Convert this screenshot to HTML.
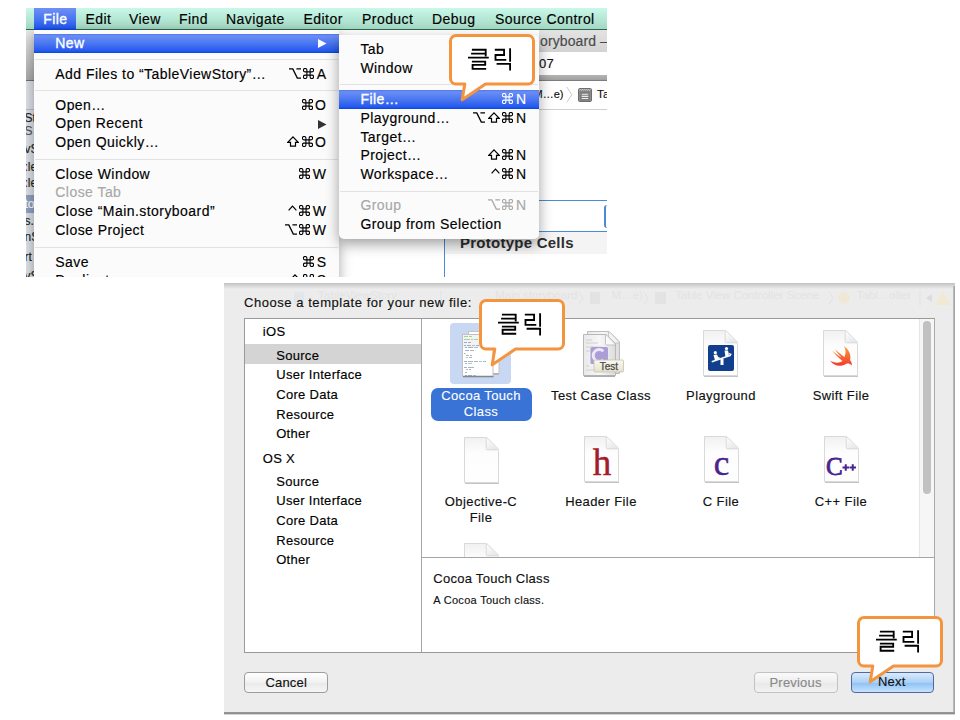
<!DOCTYPE html><html><head><meta charset="utf-8"><style>
html,body{margin:0;padding:0}
body{width:960px;height:720px;position:relative;overflow:hidden;background:#fff;font-family:"Liberation Sans",sans-serif}
.t{position:absolute;white-space:nowrap;-webkit-text-stroke:0.15px currentColor}
.k{display:inline-block;vertical-align:0;margin-right:2.5px;overflow:visible}
.clip{position:absolute;left:0;top:0;width:960px;height:720px}
</style></head><body>
<svg width="0" height="0" style="position:absolute">
<defs>
<symbol id="cmd" viewBox="0 0 11 11"><path d="M3.9 3.9H7.1V7.1H3.9ZM3.9 3.9V2.15A1.75 1.75 0 1 0 2.15 3.9H3.9M7.1 3.9V2.15A1.75 1.75 0 1 1 8.85 3.9H7.1M7.1 7.1V8.85A1.75 1.75 0 1 0 8.85 7.1H7.1M3.9 7.1V8.85A1.75 1.75 0 1 1 2.15 7.1H3.9" fill="none" stroke="currentColor" stroke-width="1.1"/></symbol>
<symbol id="opt" viewBox="0 0 12 11"><path d="M0 0.9H3.8L8.3 10.1H12M7.4 0.9H12" fill="none" stroke="currentColor" stroke-width="1.3"/></symbol>
<symbol id="shf" viewBox="0 0 12 11"><path d="M6 0.9L11.2 6.3H8.5V10.2H3.5V6.3H0.8Z" fill="none" stroke="currentColor" stroke-width="1.2" stroke-linejoin="miter"/></symbol>
<symbol id="car" viewBox="0 0 9 11"><path d="M0.6 5.4L4.5 1.1L8.4 5.4" fill="none" stroke="currentColor" stroke-width="1.2"/></symbol>
<symbol id="klik" viewBox="0 0 50 30">
<g fill="none" stroke="#000" stroke-width="1.85" stroke-linecap="butt">
<path d="M7.3 4.9H21.1V11.7"/><path d="M6.5 8.85H20.6"/><path d="M3.4 12.8H24.2"/>
<path d="M7.3 16.8H20.6V20H8V24H21.6"/>
<path d="M30.2 4.9H39.5V10.2H30.9V15.1H41.7"/><path d="M45.5 3.4V16.9"/>
<path d="M32 19H45.5V25.6"/>
</g></symbol>
</defs></svg>

<div class="clip" style="clip-path:inset(8px 353px 443px 26px)">
<div style="position:absolute;left:26px;top:30px;width:581px;height:247px;background:#fff"></div>
<div style="position:absolute;left:26px;top:30px;width:8px;height:50px;background:linear-gradient(#e9e9e9,#a9a9a9)"></div>
<div style="position:absolute;left:26px;top:80px;width:8px;height:1px;background:#6f6f6f"></div>
<div style="position:absolute;left:26px;top:81px;width:8px;height:196px;background:#dde1e6"></div>
<div style="position:absolute;left:26px;top:109px;width:8px;height:1px;background:#b9bcc0"></div>
<div style="position:absolute;left:26px;top:195px;width:8px;height:18px;background:#8fa2c4"></div>
<div class="t" style="left:24.50px;top:111.84px;font-size:12px;line-height:12px;color:#222;letter-spacing:0px;font-weight:normal;">Sto</div>
<div class="t" style="left:24.50px;top:125.34px;font-size:12px;line-height:12px;color:#555;letter-spacing:0px;font-weight:normal;">S S</div>
<div class="t" style="left:24.50px;top:142.84px;font-size:12px;line-height:12px;color:#222;letter-spacing:0px;font-weight:normal;">vS</div>
<div class="t" style="left:24.50px;top:160.84px;font-size:12px;line-height:12px;color:#222;letter-spacing:0px;font-weight:normal;">:le</div>
<div class="t" style="left:24.50px;top:177.34px;font-size:12px;line-height:12px;color:#222;letter-spacing:0px;font-weight:normal;">:le</div>
<div class="t" style="left:24.50px;top:198.34px;font-size:12px;line-height:12px;color:#fff;letter-spacing:0px;font-weight:normal;">to</div>
<div class="t" style="left:24.50px;top:214.84px;font-size:12px;line-height:12px;color:#222;letter-spacing:0px;font-weight:normal;">s.:</div>
<div class="t" style="left:24.50px;top:231.34px;font-size:12px;line-height:12px;color:#222;letter-spacing:0px;font-weight:normal;">nS</div>
<div class="t" style="left:24.50px;top:251.24px;font-size:12px;line-height:12px;color:#222;letter-spacing:0px;font-weight:normal;">rt</div>
<div class="t" style="left:24.50px;top:269.84px;font-size:12px;line-height:12px;color:#222;letter-spacing:0px;font-weight:normal;">vS</div>
<div style="position:absolute;left:539px;top:30px;width:68px;height:22px;background:linear-gradient(#e3e3e3,#d3d3d3)"></div>
<div class="t" style="left:540.00px;top:33.55px;font-size:14px;line-height:14px;color:#4a4a4a;letter-spacing:0.1px;font-weight:normal;">oryboard –</div>
<div class="t" style="left:539.00px;top:56.60px;font-size:13px;line-height:13px;color:#111;letter-spacing:0.2px;font-weight:normal;">07</div>
<div style="position:absolute;left:539px;top:75px;width:68px;height:6px;background:linear-gradient(#b4b4b4,#9c9c9c)"></div>
<div style="position:absolute;left:539px;top:80px;width:68px;height:1px;background:#7d7d7d"></div>
<div class="t" style="right:396.50px;top:89.29px;font-size:11px;line-height:11px;color:#111;letter-spacing:0px;font-weight:normal;">M…e)</div>
<svg style="position:absolute;left:566px;top:86px" width="10" height="18"><path d="M0.8 1L5.8 8.7L0.8 16.3" fill="none" stroke="#c4c4c4" stroke-width="0.9"/></svg>
<svg style="position:absolute;left:578px;top:88px" width="15" height="14"><rect x="0.5" y="0.5" width="13" height="13" rx="1.2" fill="#8c8c8c" stroke="#6e6e6e" stroke-width="1"/><path d="M1.5 2.2L2.5 1.5L3.5 2.2L4.5 1.5L5.5 2.2L6.5 1.5L7.5 2.2L8.5 1.5L9.5 2.2L10.5 1.5L11.5 2.2L12.5 1.5" fill="none" stroke="#e0e0e0" stroke-width="0.8"/><rect x="2" y="3.5" width="10" height="9" fill="#7d7d7d"/><path d="M3.7 6.2H10.3M3.7 8.4H10.3M3.7 10.5H10.3" stroke="#ececec" stroke-width="1.1"/></svg>
<div class="t" style="left:597.00px;top:88.87px;font-size:11.5px;line-height:11.5px;color:#111;letter-spacing:0.2px;font-weight:normal;">Ta</div>
<div style="position:absolute;left:539px;top:109px;width:68px;height:1px;background:#cfcfcf"></div>
<div style="position:absolute;left:444px;top:200px;width:1px;height:77px;background:#4a8ad8"></div>
<div style="position:absolute;left:444px;top:200px;width:163px;height:1px;background:#4a8ad8"></div>
<div style="position:absolute;left:444px;top:231px;width:163px;height:1px;background:#4a8ad8"></div>
<div style="position:absolute;left:604px;top:205px;width:3px;height:23px;border-left:2px solid #4a8ad8;border-radius:3px 0 0 3px;box-sizing:border-box"></div>
<div style="position:absolute;left:445px;top:232px;width:162px;height:22px;background:#f4f4f4"></div>
<div class="t" style="left:460.00px;top:234.50px;font-size:15px;line-height:15px;color:#2e2e2e;letter-spacing:0.25px;font-weight:bold;-webkit-text-stroke:0">Prototype Cells</div>
<div style="position:absolute;left:26px;top:8px;width:581px;height:21px;background:linear-gradient(#c9f8e9,#a3d8c3)"></div>
<div style="position:absolute;left:26px;top:29px;width:581px;height:1px;background:#2c664e"></div>
<div style="position:absolute;left:34px;top:8px;width:42px;height:22px;background:linear-gradient(#6f90f4 0%,#4a76f1 50%,#2459ef 90%,#0543dc 100%)"></div>
<div class="t" style="left:43.20px;top:12.15px;font-size:14px;line-height:14px;color:#fff;letter-spacing:0.45px;font-weight:normal;-webkit-text-stroke:0.35px #fff">File</div>
<div class="t" style="left:85.40px;top:12.15px;font-size:14px;line-height:14px;color:#000;letter-spacing:0.45px;font-weight:normal;">Edit</div>
<div class="t" style="left:129.00px;top:12.15px;font-size:14px;line-height:14px;color:#000;letter-spacing:0.45px;font-weight:normal;">View</div>
<div class="t" style="left:179.00px;top:12.15px;font-size:14px;line-height:14px;color:#000;letter-spacing:0.45px;font-weight:normal;">Find</div>
<div class="t" style="left:226.00px;top:12.15px;font-size:14px;line-height:14px;color:#000;letter-spacing:0.45px;font-weight:normal;">Navigate</div>
<div class="t" style="left:303.50px;top:12.15px;font-size:14px;line-height:14px;color:#000;letter-spacing:0.45px;font-weight:normal;">Editor</div>
<div class="t" style="left:362.00px;top:12.15px;font-size:14px;line-height:14px;color:#000;letter-spacing:0.45px;font-weight:normal;">Product</div>
<div class="t" style="left:432.00px;top:12.15px;font-size:14px;line-height:14px;color:#000;letter-spacing:0.45px;font-weight:normal;">Debug</div>
<div class="t" style="left:495.00px;top:12.15px;font-size:14px;line-height:14px;color:#000;letter-spacing:0.45px;font-weight:normal;">Source Control</div>
<div style="position:absolute;left:34px;top:30px;width:305px;height:260px;background:#fbfbfb;box-shadow:0 4px 12px rgba(0,0,0,0.35)"></div>
<div style="position:absolute;left:34px;top:34px;width:305px;height:19px;background:linear-gradient(#4f76ee 0%,#6a8ef4 10%,#4a76f1 50%,#2459ef 90%,#0543dc 100%)"></div>
<div style="position:absolute;left:35px;top:59px;width:303px;height:1px;background:#e2e2e2"></div>
<div style="position:absolute;left:35px;top:90px;width:303px;height:1px;background:#e2e2e2"></div>
<div style="position:absolute;left:35px;top:159px;width:303px;height:1px;background:#e2e2e2"></div>
<div style="position:absolute;left:35px;top:247px;width:303px;height:1px;background:#e2e2e2"></div>
<div class="t" style="left:55.30px;top:36.15px;font-size:14px;line-height:14px;color:#fff;letter-spacing:0.45px;font-weight:normal;-webkit-text-stroke:0.35px #fff">New</div>
<div class="t" style="left:55.30px;top:66.85px;font-size:14px;line-height:14px;color:#000;letter-spacing:0.45px;font-weight:normal;">Add Files to “TableViewStory”…</div>
<div class="t" style="left:55.30px;top:97.85px;font-size:14px;line-height:14px;color:#000;letter-spacing:0.45px;font-weight:normal;">Open…</div>
<div class="t" style="left:55.30px;top:116.45px;font-size:14px;line-height:14px;color:#000;letter-spacing:0.45px;font-weight:normal;">Open Recent</div>
<div class="t" style="left:55.30px;top:135.15px;font-size:14px;line-height:14px;color:#000;letter-spacing:0.45px;font-weight:normal;">Open Quickly…</div>
<div class="t" style="left:55.30px;top:166.75px;font-size:14px;line-height:14px;color:#000;letter-spacing:0.45px;font-weight:normal;">Close Window</div>
<div class="t" style="left:55.30px;top:185.45px;font-size:14px;line-height:14px;color:#a8a8a8;letter-spacing:0.45px;font-weight:normal;">Close Tab</div>
<div class="t" style="left:55.30px;top:204.45px;font-size:14px;line-height:14px;color:#000;letter-spacing:0.45px;font-weight:normal;">Close “Main.storyboard”</div>
<div class="t" style="left:55.30px;top:223.05px;font-size:14px;line-height:14px;color:#000;letter-spacing:0.45px;font-weight:normal;">Close Project</div>
<div class="t" style="left:55.30px;top:254.65px;font-size:14px;line-height:14px;color:#000;letter-spacing:0.45px;font-weight:normal;">Save</div>
<div class="t" style="left:55.30px;top:273.35px;font-size:14px;line-height:14px;color:#000;letter-spacing:0.45px;font-weight:normal;">Duplicate…</div>
<svg style="position:absolute;left:318px;top:39px" width="9" height="9"><path d="M0 0L8.5 4.5L0 9Z" fill="#fff"/></svg>
<svg style="position:absolute;left:318px;top:119.5px" width="9" height="9"><path d="M0 0L8.5 4.5L0 9Z" fill="#333"/></svg>
<div class="t" style="right:634.00px;top:66.85px;font-size:14px;line-height:14px;color:#000;letter-spacing:0px;font-weight:normal;"><svg class="k" viewBox="0 0 12 11" width="12" height="11"><use href="#opt"/></svg><svg class="k" viewBox="0 0 11 11" width="11" height="11"><use href="#cmd"/></svg>A</div>
<div class="t" style="right:634.00px;top:97.85px;font-size:14px;line-height:14px;color:#000;letter-spacing:0px;font-weight:normal;"><svg class="k" viewBox="0 0 11 11" width="11" height="11"><use href="#cmd"/></svg>O</div>
<div class="t" style="right:634.00px;top:135.15px;font-size:14px;line-height:14px;color:#000;letter-spacing:0px;font-weight:normal;"><svg class="k" viewBox="0 0 12 11" width="12" height="11"><use href="#shf"/></svg><svg class="k" viewBox="0 0 11 11" width="11" height="11"><use href="#cmd"/></svg>O</div>
<div class="t" style="right:634.00px;top:166.75px;font-size:14px;line-height:14px;color:#000;letter-spacing:0px;font-weight:normal;"><svg class="k" viewBox="0 0 11 11" width="11" height="11"><use href="#cmd"/></svg>W</div>
<div class="t" style="right:634.00px;top:204.45px;font-size:14px;line-height:14px;color:#000;letter-spacing:0px;font-weight:normal;"><svg class="k" viewBox="0 0 9 11" width="9" height="11"><use href="#car"/></svg><svg class="k" viewBox="0 0 11 11" width="11" height="11"><use href="#cmd"/></svg>W</div>
<div class="t" style="right:634.00px;top:223.05px;font-size:14px;line-height:14px;color:#000;letter-spacing:0px;font-weight:normal;"><svg class="k" viewBox="0 0 12 11" width="12" height="11"><use href="#opt"/></svg><svg class="k" viewBox="0 0 11 11" width="11" height="11"><use href="#cmd"/></svg>W</div>
<div class="t" style="right:634.00px;top:254.65px;font-size:14px;line-height:14px;color:#000;letter-spacing:0px;font-weight:normal;"><svg class="k" viewBox="0 0 11 11" width="11" height="11"><use href="#cmd"/></svg>S</div>
<div class="t" style="right:634.00px;top:273.35px;font-size:14px;line-height:14px;color:#000;letter-spacing:0px;font-weight:normal;"><svg class="k" viewBox="0 0 12 11" width="12" height="11"><use href="#shf"/></svg><svg class="k" viewBox="0 0 11 11" width="11" height="11"><use href="#cmd"/></svg>S</div>
<div style="position:absolute;left:339px;top:35px;width:200px;height:204px;background:#fbfbfb;border-radius:0 5px 5px 5px;box-shadow:0 5px 14px rgba(0,0,0,0.38)"></div>
<div style="position:absolute;left:339px;top:90px;width:200px;height:19px;background:linear-gradient(#4f76ee 0%,#6a8ef4 10%,#4a76f1 50%,#2459ef 90%,#0543dc 100%)"></div>
<div style="position:absolute;left:340px;top:84px;width:198px;height:1px;background:#e2e2e2"></div>
<div style="position:absolute;left:340px;top:191px;width:198px;height:1px;background:#e2e2e2"></div>
<div class="t" style="left:360.40px;top:41.85px;font-size:14px;line-height:14px;color:#000;letter-spacing:0.45px;font-weight:normal;">Tab</div>
<div class="t" style="left:360.40px;top:60.55px;font-size:14px;line-height:14px;color:#000;letter-spacing:0.45px;font-weight:normal;">Window</div>
<div class="t" style="left:360.40px;top:91.85px;font-size:14px;line-height:14px;color:#fff;letter-spacing:0.45px;font-weight:normal;-webkit-text-stroke:0.35px #fff">File…</div>
<div class="t" style="left:360.40px;top:110.55px;font-size:14px;line-height:14px;color:#000;letter-spacing:0.45px;font-weight:normal;">Playground…</div>
<div class="t" style="left:360.40px;top:129.65px;font-size:14px;line-height:14px;color:#000;letter-spacing:0.45px;font-weight:normal;">Target…</div>
<div class="t" style="left:360.40px;top:148.35px;font-size:14px;line-height:14px;color:#000;letter-spacing:0.45px;font-weight:normal;">Project…</div>
<div class="t" style="left:360.40px;top:167.15px;font-size:14px;line-height:14px;color:#000;letter-spacing:0.45px;font-weight:normal;">Workspace…</div>
<div class="t" style="left:360.40px;top:198.15px;font-size:14px;line-height:14px;color:#a8a8a8;letter-spacing:0.45px;font-weight:normal;">Group</div>
<div class="t" style="left:360.40px;top:216.65px;font-size:14px;line-height:14px;color:#000;letter-spacing:0.45px;font-weight:normal;">Group from Selection</div>
<div class="t" style="right:434.00px;top:91.85px;font-size:14px;line-height:14px;color:#fff;letter-spacing:0px;font-weight:normal;"><svg class="k" viewBox="0 0 11 11" width="11" height="11"><use href="#cmd"/></svg>N</div>
<div class="t" style="right:434.00px;top:110.55px;font-size:14px;line-height:14px;color:#000;letter-spacing:0px;font-weight:normal;"><svg class="k" viewBox="0 0 12 11" width="12" height="11"><use href="#opt"/></svg><svg class="k" viewBox="0 0 12 11" width="12" height="11"><use href="#shf"/></svg><svg class="k" viewBox="0 0 11 11" width="11" height="11"><use href="#cmd"/></svg>N</div>
<div class="t" style="right:434.00px;top:148.35px;font-size:14px;line-height:14px;color:#000;letter-spacing:0px;font-weight:normal;"><svg class="k" viewBox="0 0 12 11" width="12" height="11"><use href="#shf"/></svg><svg class="k" viewBox="0 0 11 11" width="11" height="11"><use href="#cmd"/></svg>N</div>
<div class="t" style="right:434.00px;top:167.15px;font-size:14px;line-height:14px;color:#000;letter-spacing:0px;font-weight:normal;"><svg class="k" viewBox="0 0 9 11" width="9" height="11"><use href="#car"/></svg><svg class="k" viewBox="0 0 11 11" width="11" height="11"><use href="#cmd"/></svg>N</div>
<div class="t" style="right:434.00px;top:198.15px;font-size:14px;line-height:14px;color:#a8a8a8;letter-spacing:0px;font-weight:normal;"><svg class="k" viewBox="0 0 12 11" width="12" height="11"><use href="#opt"/></svg><svg class="k" viewBox="0 0 11 11" width="11" height="11"><use href="#cmd"/></svg>N</div>
</div>
<div style="position:absolute;left:224px;top:283px;width:731px;height:431px;background:#ececec;overflow:hidden">
</div>
<div style="position:absolute;left:224px;top:283px;width:731px;height:6px;background:linear-gradient(#c2c2c2,rgba(236,236,236,0))"></div>
<div style="position:absolute;left:953px;top:286px;width:2px;height:428px;background:linear-gradient(90deg,#c4c4c4,#9a9a9a)"></div>
<div style="position:absolute;left:224px;top:712px;width:731px;height:2px;background:linear-gradient(#9a9a9a,#8a8a8a)"></div>
<div style="position:absolute;left:224px;top:714px;width:731px;height:1px;background:#d6d6d6"></div>
<div class="t" style="left:318.00px;top:289.77px;font-size:11.5px;line-height:11.5px;color:#e3e3e3;letter-spacing:0px;font-weight:normal;-webkit-text-stroke:0">TableViewStory</div>
<div class="t" style="left:495.00px;top:289.77px;font-size:11.5px;line-height:11.5px;color:#e3e3e3;letter-spacing:0px;font-weight:normal;-webkit-text-stroke:0">Main.storyboard</div>
<div class="t" style="left:611.60px;top:289.77px;font-size:11.5px;line-height:11.5px;color:#e3e3e3;letter-spacing:0px;font-weight:normal;-webkit-text-stroke:0">M…e)</div>
<div class="t" style="left:675.00px;top:289.77px;font-size:11.5px;line-height:11.5px;color:#e3e3e3;letter-spacing:0px;font-weight:normal;-webkit-text-stroke:0">Table View Controller Scene</div>
<div class="t" style="left:856.70px;top:289.77px;font-size:11.5px;line-height:11.5px;color:#e3e3e3;letter-spacing:0px;font-weight:normal;-webkit-text-stroke:0">Tabl…oller</div>
<svg style="position:absolute;left:224px;top:284px" width="731" height="30"><g fill="none" stroke="#e2e2e2" stroke-width="1"><path d="M355 8L359 14L355 20"/><path d="M420 8L424 14L420 20"/><path d="M605 8L609 14L605 20"/><path d="M217 6V22"/><path d="M696 6V22"/></g><rect x="70" y="8" width="10" height="12" rx="2" fill="#e2e5ea"/><rect x="366" y="8" width="10" height="12" fill="#e3e3e3"/><rect x="431" y="8" width="11" height="12" fill="#e3e3e3"/><circle cx="620" cy="14" r="6" fill="#efe8d6"/><path d="M708 10L702 14L708 18Z" fill="#dcdcdc"/><path d="M719 7L727 21H711Z" fill="#f0ead2"/></svg>
<div class="t" style="left:244.00px;top:295.80px;font-size:13px;line-height:13px;color:#111;letter-spacing:0.55px;font-weight:normal;">Choose a template for your new file:</div>
<div style="position:absolute;left:244px;top:318px;width:689px;height:333px;background:#fff;border:1px solid #999;border-right-color:#aaa"></div>
<div style="position:absolute;left:421px;top:319px;width:1px;height:333px;background:#a5a5a5"></div>
<div style="position:absolute;left:422px;top:557px;width:512px;height:1px;background:#a5a5a5"></div>
<div style="position:absolute;left:245px;top:344px;width:176px;height:19.5px;background:#d4d4d4"></div>
<div class="t" style="left:262.80px;top:325.40px;font-size:13px;line-height:13px;color:#000;letter-spacing:0.3px;font-weight:normal;">iOS</div>
<div class="t" style="left:262.80px;top:451.80px;font-size:13px;line-height:13px;color:#000;letter-spacing:0.3px;font-weight:normal;">OS X</div>
<div class="t" style="left:276.20px;top:348.60px;font-size:13px;line-height:13px;color:#000;letter-spacing:0.3px;font-weight:normal;">Source</div>
<div class="t" style="left:276.20px;top:474.50px;font-size:13px;line-height:13px;color:#000;letter-spacing:0.3px;font-weight:normal;">Source</div>
<div class="t" style="left:276.20px;top:368.30px;font-size:13px;line-height:13px;color:#000;letter-spacing:0.3px;font-weight:normal;">User Interface</div>
<div class="t" style="left:276.20px;top:494.20px;font-size:13px;line-height:13px;color:#000;letter-spacing:0.3px;font-weight:normal;">User Interface</div>
<div class="t" style="left:276.20px;top:388.00px;font-size:13px;line-height:13px;color:#000;letter-spacing:0.3px;font-weight:normal;">Core Data</div>
<div class="t" style="left:276.20px;top:513.90px;font-size:13px;line-height:13px;color:#000;letter-spacing:0.3px;font-weight:normal;">Core Data</div>
<div class="t" style="left:276.20px;top:407.70px;font-size:13px;line-height:13px;color:#000;letter-spacing:0.3px;font-weight:normal;">Resource</div>
<div class="t" style="left:276.20px;top:533.60px;font-size:13px;line-height:13px;color:#000;letter-spacing:0.3px;font-weight:normal;">Resource</div>
<div class="t" style="left:276.20px;top:427.40px;font-size:13px;line-height:13px;color:#000;letter-spacing:0.3px;font-weight:normal;">Other</div>
<div class="t" style="left:276.20px;top:553.30px;font-size:13px;line-height:13px;color:#000;letter-spacing:0.3px;font-weight:normal;">Other</div>
<div style="position:absolute;left:919px;top:319px;width:15px;height:238px;background:#f6f6f6;border-left:1px solid #e6e6e6;box-sizing:border-box"></div>
<div style="position:absolute;left:923px;top:321px;width:8px;height:173px;background:#c1c1c1;border-radius:4px"></div>
<div style="position:absolute;left:450px;top:323px;width:61px;height:61px;background:#c8d8f3;border-radius:4px"></div>
<div style="position:absolute;left:430.5px;top:388px;width:101px;height:33px;background:#3a73d6;border-radius:7px"></div>
<div class="t" style="left:421px;width:120px;top:388px;font-size:13px;line-height:16px;color:#fff;text-align:center;letter-spacing:0.35px;white-space:normal;-webkit-text-stroke:0.1px #fff">Cocoa Touch<br>Class</div>
<div class="t" style="left:541px;width:120px;top:387.5px;font-size:13px;line-height:16px;color:#111;text-align:center;letter-spacing:0.4px">Test Case Class</div>
<div class="t" style="left:661px;width:120px;top:387.5px;font-size:13px;line-height:16px;color:#111;text-align:center;letter-spacing:0.4px">Playground</div>
<div class="t" style="left:781px;width:120px;top:387.5px;font-size:13px;line-height:16px;color:#111;text-align:center;letter-spacing:0.4px">Swift File</div>
<div class="t" style="left:421px;width:120px;top:494px;font-size:13px;line-height:16px;color:#111;text-align:center;letter-spacing:0.4px;white-space:normal">Objective-C<br>File</div>
<div class="t" style="left:541px;width:120px;top:494px;font-size:13px;line-height:16px;color:#111;text-align:center;letter-spacing:0.4px;white-space:normal">Header File</div>
<div class="t" style="left:661px;width:120px;top:494px;font-size:13px;line-height:16px;color:#111;text-align:center;letter-spacing:0.4px;white-space:normal">C File</div>
<div class="t" style="left:781px;width:120px;top:494px;font-size:13px;line-height:16px;color:#111;text-align:center;letter-spacing:0.4px;white-space:normal">C++ File</div>
<div style="position:absolute;left:422px;top:319px;width:497px;height:238px;overflow:hidden"><div style="position:absolute;left:-422px;top:-319px;width:960px;height:720px">
<svg width="0" height="0" style="position:absolute"><defs>
<linearGradient id="docg" x1="0" y1="0" x2="0" y2="1"><stop offset="0" stop-color="#f1f1f1"/><stop offset="0.35" stop-color="#fdfdfd"/><stop offset="1" stop-color="#fefefe"/></linearGradient>
<linearGradient id="foldg" x1="0" y1="0" x2="1" y2="1"><stop offset="0" stop-color="#ffffff"/><stop offset="1" stop-color="#e2e2e2"/></linearGradient>
<linearGradient id="swg" x1="0" y1="0" x2="0" y2="1"><stop offset="0" stop-color="#f9a33c"/><stop offset="1" stop-color="#f43a2c"/></linearGradient>
<linearGradient id="tagg" x1="0" y1="0" x2="0" y2="1"><stop offset="0" stop-color="#fbfaf3"/><stop offset="1" stop-color="#e4e1cc"/></linearGradient>
<linearGradient id="tdocg" x1="0" y1="0" x2="1" y2="0"><stop offset="0" stop-color="#e9e9e9"/><stop offset="0.5" stop-color="#f7f7f7"/><stop offset="1" stop-color="#dcdcdc"/></linearGradient>
<symbol id="doc" viewBox="0 0 37 48" overflow="visible">
<path d="M1 46.2H35" stroke="#c4c4c4" stroke-width="1.4"/>
<path d="M0.5 0.5H21.5C22.5 0.5 23.3 0.9 24 1.6L33.4 11C34.1 11.7 34.5 12.5 34.5 13.5V45.5H0.5Z" fill="url(#docg)" stroke="#d9d9d9" stroke-width="1"/>
<path d="M22.2 1V11.5C22.2 12.3 22.7 12.8 23.5 12.8H34" fill="url(#foldg)" stroke="#d2d2d2" stroke-width="0.8"/>
</symbol>
</defs></svg>
<svg style="position:absolute;left:461px;top:330px;overflow:visible" width="40" height="48">
<rect x="7.5" y="1.5" width="30.5" height="42" fill="#fff" stroke="#c4c4c4" stroke-width="1"/>
<rect x="8" y="43.5" width="30" height="1.2" fill="#8c8c8c" opacity="0.6"/>
<rect x="1.5" y="4.5" width="30.5" height="41.5" fill="#fff" stroke="#c0c0c0" stroke-width="1"/>
<rect x="2" y="46" width="30.5" height="1.3" fill="#6a6a6a" opacity="0.7"/>
<rect x="2" y="5" width="29.5" height="13" fill="#f3f3f3"/>
<g transform="translate(0 2)"><rect x="3" y="4" width="4" height="1" fill="#4fb848" opacity="0.5"/><rect x="8" y="4" width="3" height="1" fill="#4fb848" opacity="0.5"/><rect x="3" y="7" width="6" height="1" fill="#4fb848" opacity="0.5"/><rect x="10" y="7" width="2" height="1" fill="#4fb848" opacity="0.5"/><rect x="13" y="7" width="4" height="1" fill="#4fb848" opacity="0.5"/><rect x="3" y="10" width="3" height="1" fill="#3163d0" opacity="0.5"/><rect x="7" y="10" width="3" height="1" fill="#666" opacity="0.5"/><rect x="3" y="13" width="2" height="1" fill="#3163d0" opacity="0.5"/><rect x="6" y="13" width="4" height="1" fill="#666" opacity="0.5"/><rect x="11" y="13" width="3" height="1" fill="#3a9ad8" opacity="0.5"/><rect x="15" y="13" width="3" height="1" fill="#666" opacity="0.5"/><rect x="4" y="15" width="2" height="1" fill="#3163d0" opacity="0.5"/><rect x="7" y="15" width="5" height="1" fill="#666" opacity="0.5"/><rect x="13" y="15" width="4" height="1" fill="#3a9ad8" opacity="0.5"/><rect x="4" y="18" width="4" height="1" fill="#3163d0" opacity="0.5"/><rect x="9" y="18" width="4" height="1" fill="#666" opacity="0.5"/><rect x="3" y="21" width="1.5" height="1" fill="#666" opacity="0.5"/><rect x="5" y="23" width="3" height="1" fill="#666" opacity="0.5"/><rect x="9" y="23" width="2" height="1" fill="#3163d0" opacity="0.5"/><rect x="5" y="25" width="2" height="1" fill="#4fb848" opacity="0.5"/><rect x="8" y="25" width="3" height="1" fill="#666" opacity="0.5"/><rect x="3" y="29" width="3" height="1" fill="#3163d0" opacity="0.5"/><rect x="7" y="29" width="5" height="1" fill="#666" opacity="0.5"/><rect x="13" y="29" width="4" height="1" fill="#666" opacity="0.5"/><rect x="18" y="29" width="3" height="1" fill="#3a9ad8" opacity="0.5"/><rect x="22" y="29" width="3" height="1" fill="#666" opacity="0.5"/><rect x="4" y="31" width="2" height="1" fill="#666" opacity="0.5"/><rect x="7" y="31" width="4" height="1" fill="#3a9ad8" opacity="0.5"/><rect x="3" y="35" width="3" height="1" fill="#3163d0" opacity="0.5"/><rect x="7" y="35" width="6" height="1" fill="#666" opacity="0.5"/><rect x="5" y="37" width="2" height="1" fill="#666" opacity="0.5"/><rect x="8" y="37" width="2" height="1" fill="#3163d0" opacity="0.5"/><rect x="4" y="40" width="2" height="1" fill="#666" opacity="0.5"/><rect x="4" y="43" width="2" height="1" fill="#3163d0" opacity="0.5"/><rect x="7" y="43" width="4" height="1" fill="#666" opacity="0.5"/><rect x="12" y="43" width="3" height="1" fill="#3a9ad8" opacity="0.5"/></g>
</svg>
<svg style="position:absolute;left:582px;top:330px;overflow:visible" width="44" height="48">
<path d="M5.5 1.5H26C27 1.5 27.7 1.9 28.4 2.6L36.4 10.6C37.1 11.3 37.5 12 37.5 13V43.5H5.5Z" fill="url(#tdocg)" stroke="#bdbdbd"/>
<path d="M26.5 2V11.5C26.5 12.5 27 13 28 13H37" fill="#f4f4f4" stroke="#bcbcbc" stroke-width="0.8"/>
<path d="M1.5 4.5H23C24 4.5 24.7 4.9 25.4 5.6L32.4 12.6C33.1 13.3 33.5 14 33.5 15V45.5H1.5Z" fill="url(#tdocg)" stroke="#b8b8b8"/>
<path d="M23.5 5V13.5C23.5 14.5 24 15 25 15H33" fill="#fafafa" stroke="#b8b8b8" stroke-width="0.8"/>
<path d="M2 46.3H33" stroke="#9a9a9a" stroke-width="1"/>
<path d="M4 10H10M4 13H16M4 17H20M4 21H8M4 36H7M4 40H12" stroke="#c9c9c9" stroke-width="0.8"/>
<rect x="8.5" y="17" width="17.5" height="17" rx="1.5" fill="#ab9dd6"/>
<path d="M21.4 21.2A6 6 0 1 0 21.4 29.8" fill="none" stroke="#ece8f6" stroke-width="3"/>
<rect x="12" y="30" width="29.5" height="12" rx="1" fill="url(#tagg)" stroke="#c5c2ad" stroke-width="0.8"/>
<text x="26.8" y="39.5" text-anchor="middle" font-family="Liberation Sans" font-size="10" fill="#4a4a4a" stroke="#4a4a4a" stroke-width="0.25">Test</text>
</svg>
<svg style="position:absolute;left:703px;top:330px;overflow:visible" width="37" height="48" viewBox="0 0 37 48"><use href="#doc"/><rect x="5" y="15" width="26" height="26" rx="2" fill="#123f8d"/>
<g fill="#fff"><path d="M8.5 31L27.5 24.5L28 26L9 32.5Z"/><circle cx="12.3" cy="22.7" r="1.6"/><circle cx="23.5" cy="18.6" r="1.6"/>
<path d="M10.5 25L14 24.5L16 29L12 30.5Z"/><path d="M21.5 20.5L25 20.5L26 25.5L22.5 27Z"/><path d="M17.5 29H20.5V35H17.5Z"/>
<path d="M12 26.5L17 27.5L16 29Z"/><path d="M24.5 22.5L29 24L27.5 25.5Z"/></g></svg>
<svg style="position:absolute;left:823px;top:330px;overflow:visible" width="37" height="48" viewBox="0 0 37 48"><use href="#doc"/><path d="M21 16C26 19.5 28.5 25 27 30C28.5 32 29.5 34 28.5 35.5C27 33.5 25 33 23 34C18 37 11 36.5 7 30.5C11 33 16 33.5 19.5 31C15.5 28 11.5 23.5 9 20.5C12 23 16 26 18.5 27.5C16 25 13.5 21.5 11.5 19C15 22 19 25.5 21.5 27C23 23.5 23 19.5 21 16Z" fill="url(#swg)"/></svg>
<svg style="position:absolute;left:463.5px;top:437px;overflow:visible" width="37" height="48" viewBox="0 0 37 48"><use href="#doc"/></svg>
<svg style="position:absolute;left:583.5px;top:436px;overflow:visible" width="37" height="48" viewBox="0 0 37 48"><use href="#doc"/><text x="18" y="38.8" text-anchor="middle" font-family="Liberation Serif" font-size="37" fill="#a41b2b" stroke="#a41b2b" stroke-width="0.45">h</text></svg>
<svg style="position:absolute;left:703.5px;top:436px;overflow:visible" width="37" height="48" viewBox="0 0 37 48"><use href="#doc"/><text x="17.5" y="38.8" text-anchor="middle" font-family="Liberation Serif" font-size="35" fill="#4b238f" stroke="#4b238f" stroke-width="0.45">c</text></svg>
<svg style="position:absolute;left:823.5px;top:436px;overflow:visible" width="37" height="48" viewBox="0 0 37 48"><use href="#doc"/><text x="2" y="38.8" font-family="Liberation Serif" font-size="25" fill="#4b238f" stroke="#4b238f" stroke-width="0.8">C</text><path d="M18.5 31.5H25M21.75 28.2V34.8M25.5 31.5H32M28.75 28.2V34.8" stroke="#4b238f" stroke-width="2"/></svg>
<svg style="position:absolute;left:463.5px;top:543px;overflow:visible" width="37" height="48" viewBox="0 0 37 48"><use href="#doc"/></svg>
</div></div>
<div class="t" style="left:433.30px;top:571.50px;font-size:13px;line-height:13px;color:#111;letter-spacing:0.27px;font-weight:normal;">Cocoa Touch Class</div>
<div class="t" style="left:433.30px;top:595.39px;font-size:11px;line-height:11px;color:#111;letter-spacing:0.3px;font-weight:normal;">A Cocoa Touch class.</div>
<div style="position:absolute;left:244px;top:672px;width:83.5px;height:20.5px;background:linear-gradient(#ffffff,#f1f1f1 50%,#e9e9e9 51%,#f6f6f6);border:1px solid #9d9d9d;border-radius:4px;box-sizing:border-box"></div>
<div class="t" style="left:265.40px;top:675.70px;font-size:13px;line-height:13px;color:#111;letter-spacing:0.2px;font-weight:normal;">Cancel</div>
<div style="position:absolute;left:754px;top:672px;width:84px;height:20.5px;background:linear-gradient(#fafafa,#eeeeee 50%,#e8e8e8 51%,#f2f2f2);border:1px solid #c2c2c2;border-radius:4px;box-sizing:border-box"></div>
<div class="t" style="left:769.50px;top:675.70px;font-size:13px;line-height:13px;color:#8a8a8a;letter-spacing:0.2px;font-weight:normal;">Previous</div>
<div style="position:absolute;left:851px;top:672px;width:82.5px;height:20.5px;background:linear-gradient(#d9ebfc,#a9d0f6 50%,#8cc0f3 51%,#c6e3fd);border:1px solid #53689e;border-radius:4px;box-sizing:border-box"></div>
<div class="t" style="left:878.00px;top:675.30px;font-size:13px;line-height:13px;color:#111;letter-spacing:0.2px;font-weight:normal;">Next</div>
<svg style="position:absolute;left:447.4px;top:32.2px" width="92" height="73" viewBox="-2 -2 92 73"><path d="M7 1.5H79A5.5 5.5 0 0 1 84.5 7V44.5A5.5 5.5 0 0 1 79 50H36.5L13.2 65.8L15.8 50H7A5.5 5.5 0 0 1 1.5 44.5V7A5.5 5.5 0 0 1 7 1.5Z" fill="#fff" stroke="#f4943f" stroke-width="3" stroke-linejoin="round"/><use href="#klik" x="0" y="0" width="50" height="30" transform="translate(15.6 10.8)"/></svg>
<svg style="position:absolute;left:477.4px;top:297.4px" width="92" height="73" viewBox="-2 -2 92 73"><path d="M7 1.5H79A5.5 5.5 0 0 1 84.5 7V44.5A5.5 5.5 0 0 1 79 50H36.5L13.2 65.8L15.8 50H7A5.5 5.5 0 0 1 1.5 44.5V7A5.5 5.5 0 0 1 7 1.5Z" fill="#fff" stroke="#f4943f" stroke-width="3" stroke-linejoin="round"/><use href="#klik" x="0" y="0" width="50" height="30" transform="translate(15.6 10.8)"/></svg>
<svg style="position:absolute;left:855.3px;top:614px" width="92" height="73" viewBox="-2 -2 92 73"><path d="M7 1.5H79A5.5 5.5 0 0 1 84.5 7V44.5A5.5 5.5 0 0 1 79 50H36.5L13.2 65.8L15.8 50H7A5.5 5.5 0 0 1 1.5 44.5V7A5.5 5.5 0 0 1 7 1.5Z" fill="#fff" stroke="#f4943f" stroke-width="3" stroke-linejoin="round"/><use href="#klik" x="0" y="0" width="50" height="30" transform="translate(15.6 10.8)"/></svg>
</body></html>
